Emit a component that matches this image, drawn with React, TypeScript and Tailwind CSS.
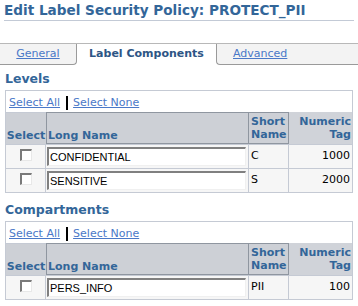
import React from "react";

const font = { fontFamily: '"DejaVu Sans", Verdana, sans-serif' };

function Checkbox() {
  return (
    <div className="mx-auto w-[12px] h-[12px] bg-white border-t-2 border-l-2 border-t-[#7a7a7a] border-l-[#7a7a7a] border-r border-b border-r-[#e8e8e8] border-b-[#e8e8e8]" />
  );
}

function TextInput({ value }: { value: string }) {
  return (
    <div
      className="h-[19px] w-[199px] bg-white border-t-2 border-l-2 border-t-[#808080] border-l-[#808080] border-r border-b border-r-[#f0f0f0] border-b-[#f0f0f0] pl-[1px] text-[11px] leading-[17px] text-black"
      style={{ fontFamily: '"Liberation Sans", Arial, sans-serif' }}
    >
      {value}
    </div>
  );
}

function Section({
  title,
  rows,
}: {
  title: string;
  rows: { long: string; short: string; tag: string }[];
}) {
  return (
    <div>
      <div className="px-[5px] h-[20px] text-[12.5px] font-bold text-[#336699] leading-[20px]">{title}</div>
      <div className="mx-[5px] mt-[1px] border border-[#c5cad4] w-[348px]">
        <div className="h-[21px] flex items-center pl-[3px] pt-[3px] text-[11px]">
          <span className="text-[#4a78c8] underline">Select All</span>
          <span className="ml-[6px] mr-[5px] w-[2px] h-[14px] bg-black" />
          <span className="text-[#4a78c8] underline">Select None</span>
        </div>
        <div className="flex h-[32px] text-[11px] font-bold text-[#336699] leading-[13px]">
          <div className="w-[40px] bg-[#cdd0d6] border-t border-[#c5cad4] flex items-end justify-center pb-[2px]">Select</div>
          <div className="w-[203px] bg-[#cdd0d6] border border-[#8f96a0] flex items-end pl-[1px] pb-[1px]">Long Name</div>
          <div className="w-[40px] bg-[#cdd0d6] border border-l-0 border-[#8f96a0] flex items-center pl-[2px]">
            <span>Short<br />Name</span>
          </div>
          <div className="flex-1 bg-[#d0d3d9] flex items-center justify-end pr-[1px] text-right">
            <span>Numeric<br />Tag</span>
          </div>
        </div>
        {rows.map((r, i) => (
          <div key={i} className="flex h-[24px] border-t border-[#c5cad4] bg-[#f6f6f6] text-[11px] text-black">
            <div className="w-[40px] flex items-center pb-[4px] border-r border-[#c5cad4]">
              <Checkbox />
            </div>
            <div className="w-[203px] flex items-center pl-[1px] border-r border-[#c5cad4]">
              <TextInput value={r.long} />
            </div>
            <div className="w-[40px] flex items-center pl-[2px] border-r border-[#c5cad4]">{r.short}</div>
            <div className="flex-1 flex items-center justify-end pr-[2px]">{r.tag}</div>
          </div>
        ))}
      </div>
    </div>
  );
}

export default function App() {
  return (
    <div className="w-[358px] h-[306px] bg-white overflow-hidden" style={font}>
      <div className="mx-[4px] h-[21px] border-b border-[#c3cad6] text-[13.6px] font-bold text-[#336699] leading-[19px] pt-[1px]">
        Edit Label Security Policy: PROTECT_PII
      </div>
      <div className="h-[22px]" />
      <div className="flex h-[22px] border-t border-[#b8b8b8] text-[11px]">
        <div className="w-[77px] bg-[#f3f3f3] border-r border-b border-[#9a9a9a] rounded-br-[4px] flex items-center justify-center">
          <span className="text-[#4a78c8] underline">General</span>
        </div>
        <div className="w-[139px] bg-white flex items-center justify-center font-bold text-[#2d5585]">Label Components</div>
        <div className="flex-1 bg-[#f3f3f3] border-l border-b border-[#9a9a9a] rounded-bl-[4px] flex items-center pl-[16px]">
          <span className="text-[#4a78c8] underline">Advanced</span>
        </div>
      </div>
      <div className="h-[4px]" />
      <Section
        title="Levels"
        rows={[
          { long: "CONFIDENTIAL", short: "C", tag: "1000" },
          { long: "SENSITIVE", short: "S", tag: "2000" },
        ]}
      />
      <div className="h-[7px]" />
      <Section title="Compartments" rows={[{ long: "PERS_INFO", short: "PII", tag: "100" }]} />
    </div>
  );
}
